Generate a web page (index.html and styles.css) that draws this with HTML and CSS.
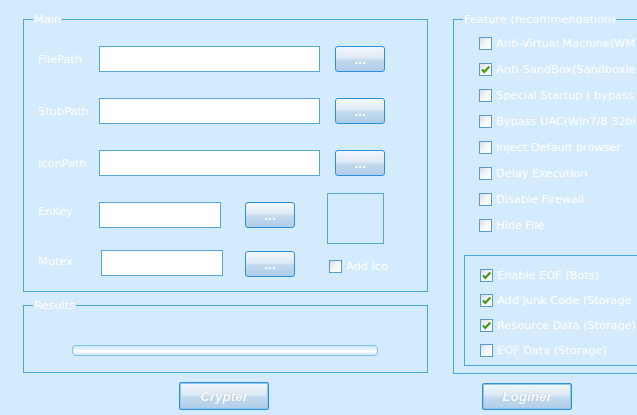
FILE: index.html
```html
<!DOCTYPE html>
<html>
<head>
<meta charset="utf-8">
<title>Crypter</title>
<link rel="stylesheet" href="styles.css">
</head>
<body>
<div class="app">
  <div class="left">
    <fieldset class="group main">
      <legend>Main</legend>
      <div class="main-body">
        <div class="paths">
          <span class="lbl">FilePath</span><span class="input"></span><span class="btn">...</span>
          <span class="lbl">StubPath</span><span class="input"></span><span class="btn">...</span>
          <span class="lbl">IconPath</span><span class="input"></span><span class="btn">...</span>
        </div>
        <div class="lower">
          <div class="keys">
            <div class="krow enkey"><span class="lbl">EnKey</span><span class="input short"></span><span class="btn">...</span></div>
            <div class="krow mutex"><span class="lbl">Mutex</span><span class="input short"></span><span class="btn">...</span></div>
          </div>
          <div class="icon-side">
            <div class="picbox"></div>
            <div class="chk addico"><span class="box"></span><span>Add Ico</span></div>
          </div>
        </div>
      </div>
    </fieldset>
    <fieldset class="group results">
      <legend>Results</legend>
      <div class="results-body">
        <div class="progress"></div>
      </div>
    </fieldset>
    <div class="bigbtn crypter">Crypter</div>
  </div>
  <div class="right">
    <fieldset class="group feature">
      <legend>Feature (recommendation)</legend>
      <div class="chklist">
        <div class="chk"><span class="box"></span><span>Anti-Virtual Machine(WM</span></div>
        <div class="chk"><span class="box on"><svg viewBox="0 0 11 11"><path d="M2 5.5 L4.3 8 L9.3 2.6"/></svg></span><span>Anti-SandBox(Sandboxie</span></div>
        <div class="chk"><span class="box"></span><span>Special Startup ( bypass</span></div>
        <div class="chk"><span class="box"></span><span>Bypass UAC(Win7/8 32bi</span></div>
        <div class="chk"><span class="box"></span><span>Inject Default browser</span></div>
        <div class="chk"><span class="box"></span><span>Delay Execution</span></div>
        <div class="chk"><span class="box"></span><span>Disable Firewall</span></div>
        <div class="chk"><span class="box"></span><span>Hide File</span></div>
      </div>
      <div class="inner">
        <div class="chk"><span class="box on"><svg viewBox="0 0 11 11"><path d="M2 5.5 L4.3 8 L9.3 2.6"/></svg></span><span>Enable EOF (Bots)</span></div>
        <div class="chk"><span class="box on"><svg viewBox="0 0 11 11"><path d="M2 5.5 L4.3 8 L9.3 2.6"/></svg></span><span>Add Junk Code (Storage</span></div>
        <div class="chk"><span class="box on"><svg viewBox="0 0 11 11"><path d="M2 5.5 L4.3 8 L9.3 2.6"/></svg></span><span>Resource Data (Storage)</span></div>
        <div class="chk"><span class="box"></span><span>EOF Data (Storage)</span></div>
      </div>
    </fieldset>
    <div class="bigbtn loginer">Loginer</div>
  </div>
</div>
</body>
</html>
```
FILE: styles.css
```css
html, body {
  margin: 0;
  padding: 0;
  width: 637px;
  height: 415px;
  overflow: hidden;
  background: #d4eafd;
}
body {
  font-family: "DejaVu Sans", Verdana, sans-serif;
  font-size: 11.3px;
  color: #ffffff;
}
.app {
  display: flex;
  align-items: flex-start;
  padding: 13px 0 0 23px;
  gap: 25px;
}
.left {
  width: 405px;
  flex: none;
  display: flex;
  flex-direction: column;
}
.group {
  margin: 0;
  padding: 0;
  border: 1px solid #4aa7dc;
  box-sizing: border-box;
  min-width: 0;
}
.group legend {
  margin-left: 9px;
  padding: 0 1px;
  line-height: 13px;
  color: #ffffff;
}
.main {
  width: 405px;
}
.main-body {
  padding: 20px 0 14px 14px;
}
.paths {
  display: grid;
  grid-template-columns: 61px 221px 50px;
  grid-auto-rows: 26px;
  row-gap: 26px;
  align-items: center;
}
.paths .btn {
  margin-left: 15px;
}
.lbl {
  white-space: nowrap;
}
.input {
  display: block;
  height: 26px;
  box-sizing: border-box;
  background: #ffffff;
  border: 1px solid #55a7d8;
}
.btn {
  display: flex;
  align-items: flex-end;
  justify-content: center;
  box-sizing: border-box;
  width: 50px;
  height: 26px;
  padding-bottom: 5px;
  border: 1px solid #2b90d8;
  border-radius: 3px;
  background: linear-gradient(#f4f8fd 0%, #dde9f5 45%, #c2d9ee 55%, #aecde9 100%);
  color: #ffffff;
  font-weight: bold;
  font-size: 10px;
  line-height: 10px;
}
.lower {
  display: flex;
  align-items: flex-start;
  margin-top: 17px;
}
.keys {
  display: flex;
  flex-direction: column;
  gap: 21px;
  margin-top: 9px;
}
.krow {
  display: flex;
  align-items: center;
}
.input.short {
  width: 122px;
}
.enkey .lbl {
  width: 61px;
  margin-top: -8px;
}
.enkey .btn {
  margin-left: 24px;
}
.mutex .lbl {
  width: 63px;
  margin-top: -3px;
}
.mutex .btn {
  margin-left: 22px;
  margin-top: 2px;
}
.icon-side {
  margin-left: 32px;
  display: flex;
  flex-direction: column;
}
.picbox {
  width: 57px;
  height: 51px;
  box-sizing: border-box;
  border: 1px solid #55a7d8;
}
.chk {
  display: flex;
  align-items: center;
  gap: 4px;
  height: 13px;
  white-space: nowrap;
  line-height: 13px;
}
.addico {
  margin-top: 16px;
  margin-left: 2px;
}
.box {
  flex: none;
  width: 13px;
  height: 13px;
  box-sizing: border-box;
  border: 1px solid #5a9bcc;
  background: linear-gradient(135deg, #d8dde3 0%, #f3f5f7 45%, #ffffff 100%);
  display: flex;
  align-items: center;
  justify-content: center;
}
.box svg {
  width: 11px;
  height: 11px;
}
.box svg path {
  fill: none;
  stroke: #3f9a16;
  stroke-width: 2.2;
}
.results {
  margin-top: 7px;
  width: 405px;
}
.results-body {
  padding: 33px 0 16px 48px;
}
.progress {
  width: 306px;
  height: 11px;
  box-sizing: border-box;
  border: 1px solid #7cc4ee;
  border-radius: 4px;
  background: linear-gradient(#cfe6f7 0%, #e8f4fc 40%, #ffffff 55%, #d2e8f7 100%);
}
.bigbtn {
  width: 90px;
  height: 28px;
  box-sizing: border-box;
  border: 1px solid #2b90d8;
  border-radius: 2px;
  box-shadow: inset 0 0 0 1px #8fc6ee;
  background: linear-gradient(#f2f7fc 0%, #dce9f5 45%, #c3daee 55%, #afcde9 100%);
  display: flex;
  align-items: center;
  justify-content: center;
  font-family: "Liberation Sans", Arial, sans-serif;
  font-weight: bold;
  font-style: italic;
  font-size: 13.5px;
  color: #ffffff;
  text-shadow: 0 0 1px #8ea6bd;
}
.crypter {
  margin: 9px 0 0 156px;
}
.right {
  flex: none;
  width: 230px;
  display: flex;
  flex-direction: column;
}
.feature {
  width: 230px;
  padding: 11px 0 7px 0;
}
.chklist {
  display: flex;
  flex-direction: column;
  gap: 13px;
  padding-left: 25px;
}
.inner {
  margin: 23px 0 0 10px;
  border: 1px solid #4aa7dc;
  padding: 13px 0 8px 15px;
  display: flex;
  flex-direction: column;
  gap: 12px;
}
.loginer {
  margin: 9px 0 0 29px;
  height: 27px;
}
```
